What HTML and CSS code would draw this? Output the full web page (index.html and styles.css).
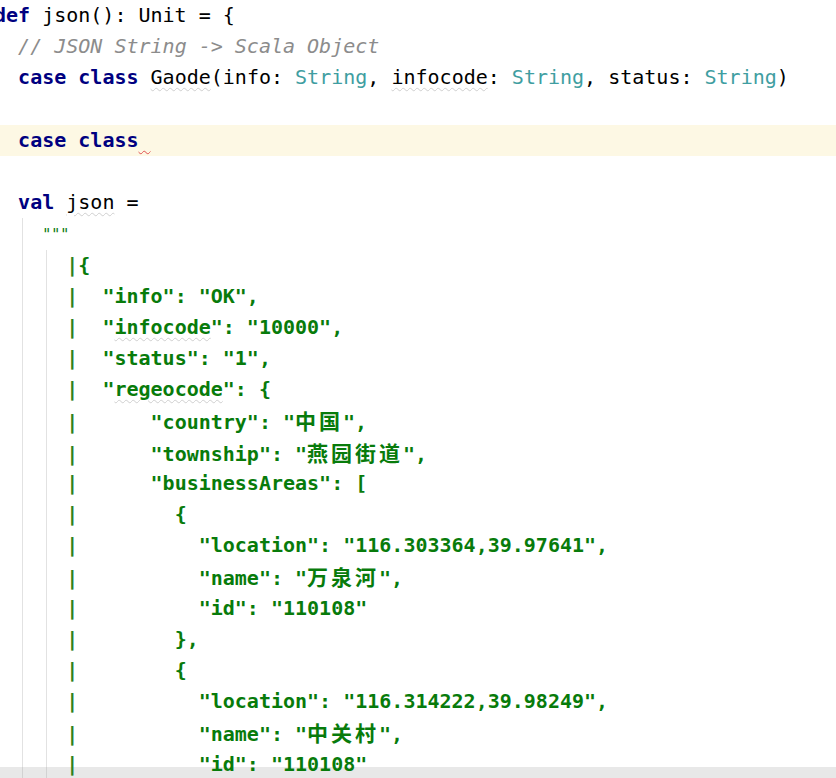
FILE: index.html
```html
<!DOCTYPE html>
<html lang="en">
<head>
<meta charset="utf-8">
<title>json()</title>
<link rel="stylesheet" href="styles.css">
</head>
<body>
<div class="editor">
  <div class="code">
    <div class="ln"><span class="kw">def</span> json(): Unit = {</div>
    <div class="ln">  <span class="cm">// JSON String -&gt; Scala Object</span></div>
    <div class="ln">  <span class="kw">case class</span> <span class="warn">Gaode</span>(info: <span class="ty">String</span>, <span class="warn">infocode</span>: <span class="ty">String</span>, status: <span class="ty">String</span>)</div>
    <div class="ln"></div>
    <div class="ln caret">  <span class="kw">case class</span><span class="err"> </span></div>
    <div class="ln"></div>
    <div class="ln">  <span class="kw">val</span> <span class="warn">json</span> =</div>
    <div class="guide1">
      <div class="ln str">    <span class="tq">"""</span></div>
      <div class="guide2">
        <div class="ln str">      <span class="bar">|</span>{</div>
        <div class="ln str">      <span class="bar">|</span>  "info": "OK",</div>
        <div class="ln str">      <span class="bar">|</span>  "<span class="warn">infocode</span>": "10000",</div>
        <div class="ln str">      <span class="bar">|</span>  "status": "1",</div>
        <div class="ln str">      <span class="bar">|</span>  "<span class="warn">regeocode</span>": {</div>
        <div class="ln str">      <span class="bar">|</span>      "country": "<span class="cjk">中国</span>",</div>
        <div class="ln str">      <span class="bar">|</span>      "township": "<span class="cjk">燕园街道</span>",</div>
        <div class="ln str">      <span class="bar">|</span>      "businessAreas": [</div>
        <div class="ln str">      <span class="bar">|</span>        {</div>
        <div class="ln str">      <span class="bar">|</span>          "location": "116.303364,39.97641",</div>
        <div class="ln str">      <span class="bar">|</span>          "name": "<span class="cjk">万泉河</span>",</div>
        <div class="ln str">      <span class="bar">|</span>          "id": "110108"</div>
        <div class="ln str">      <span class="bar">|</span>        },</div>
        <div class="ln str">      <span class="bar">|</span>        {</div>
        <div class="ln str">      <span class="bar">|</span>          "location": "116.314222,39.98249",</div>
        <div class="ln str">      <span class="bar">|</span>          "name": "<span class="cjk">中关村</span>",</div>
        <div class="ln str">      <span class="bar">|</span>          "id": "110108"</div>
      </div>
    </div>
  </div>
</div>
<div class="hscroll"></div>
</body>
</html>
```
FILE: styles.css
```css
html, body {
  margin: 0;
  padding: 0;
  background: #ffffff;
  overflow: hidden;
  height: 778px;
}

.editor {
  width: 836px;
  overflow: hidden;
}

.code {
  margin-top: 0;
  margin-left: -6px;
  font-family: "DejaVu Sans Mono", "Liberation Mono", monospace;
  font-size: 20px;
  color: #000000;
}

.ln {
  height: 31.2px;
  line-height: 31.2px;
  white-space: pre;
}

.caret {
  background: #fdf8e4;
}

.kw {
  color: #000080;
  font-weight: bold;
}

.cm {
  color: #8c8c8c;
  font-style: italic;
}

.ty {
  color: #3f9ea1;
}

.warn {
  text-decoration: underline wavy #cfcfcf;
  text-decoration-thickness: 1px;
  text-underline-offset: 3px;
}

.err {
  text-decoration: underline wavy #e05050;
  text-decoration-thickness: 1px;
  text-underline-offset: 3px;
}

.str {
  color: #087b0b;
  font-weight: bold;
}

.tq {
  font-size: 15px;
  font-weight: normal;
}

.bar {
  color: #2f7f20;
}

.cjk {
  font-family: "Noto Sans CJK SC", sans-serif;
  font-size: 21px;
  letter-spacing: 3px;
  font-weight: bold;
}

.guide1 {
  background: linear-gradient(#e2e2e2, #e2e2e2) no-repeat 28px 0 / 1px 100%;
}

.guide2 {
  background: linear-gradient(#e2e2e2, #e2e2e2) no-repeat 52px 0 / 1px 100%;
}

.hscroll {
  margin-top: -13px;
  height: 12px;
  background:
    linear-gradient(#d2d2d2, #d2d2d2) no-repeat 22px 0 / 1px 100%,
    linear-gradient(#d2d2d2, #d2d2d2) no-repeat 46px 0 / 1px 100%,
    #e8e8e8;
}
```
